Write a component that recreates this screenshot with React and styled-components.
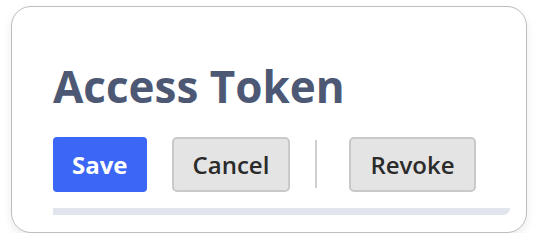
import styled, { createGlobalStyle } from 'styled-components';

const GlobalStyle = createGlobalStyle`
    html, body {
        margin: 0;
        padding: 0;
        background: #fff;
        font-family: "Open Sans", "Liberation Sans", sans-serif;
    }
`;

const Page = styled.div`
    padding: 6px 11px 0;
    box-sizing: border-box;
    width: 538px;
`;

const Card = styled.section`
    width: 516px;
    height: 227px;
    box-sizing: border-box;
    border: 1px solid #bdbdbd;
    border-radius: 20px;
    background: #fff;
    box-shadow: 0 4px 10px rgba(0, 0, 0, 0.08);
    padding: 53px 16px 16px 41px;
    display: flex;
    flex-direction: column;
`;

const Title = styled.h2`
    margin: 0;
    font-size: 44px;
    line-height: 1.2;
    font-weight: 700;
    color: #4c5874;
`;

const Actions = styled.div`
    display: flex;
    align-items: center;
    gap: 25px;
    margin-top: 24px;
`;

const Button = styled.button`
    height: 55px;
    box-sizing: border-box;
    padding: 0 19px;
    font-family: inherit;
    font-size: 24px;
    font-weight: ${(p) => (p.$primary ? 700 : 600)};
    border-radius: ${(p) => (p.$primary ? '4px' : '5px')};
    border: ${(p) => (p.$primary ? 'none' : '2px solid #c9c9c9')};
    background: ${(p) => (p.$primary ? '#3b66f6' : '#e4e4e4')};
    color: ${(p) => (p.$primary ? '#fff' : '#2b2b2b')};
`;

const Divider = styled.span`
    width: 2px;
    height: 48px;
    background: #cfcfcf;
    margin-right: 7px;
`;

const Track = styled.div`
    margin-top: 16px;
    height: 7px;
    background: #e1e5ee;
    border-radius: 0 0 8px 0;
`;

const App = () => {
    return (
        <Page>
            <GlobalStyle />
            <Card>
                <Title>Access Token</Title>
                <Actions>
                    <Button $primary>Save</Button>
                    <Button>Cancel</Button>
                    <Divider />
                    <Button>Revoke</Button>
                </Actions>
                <Track />
            </Card>
        </Page>
    );
};

export default App;
